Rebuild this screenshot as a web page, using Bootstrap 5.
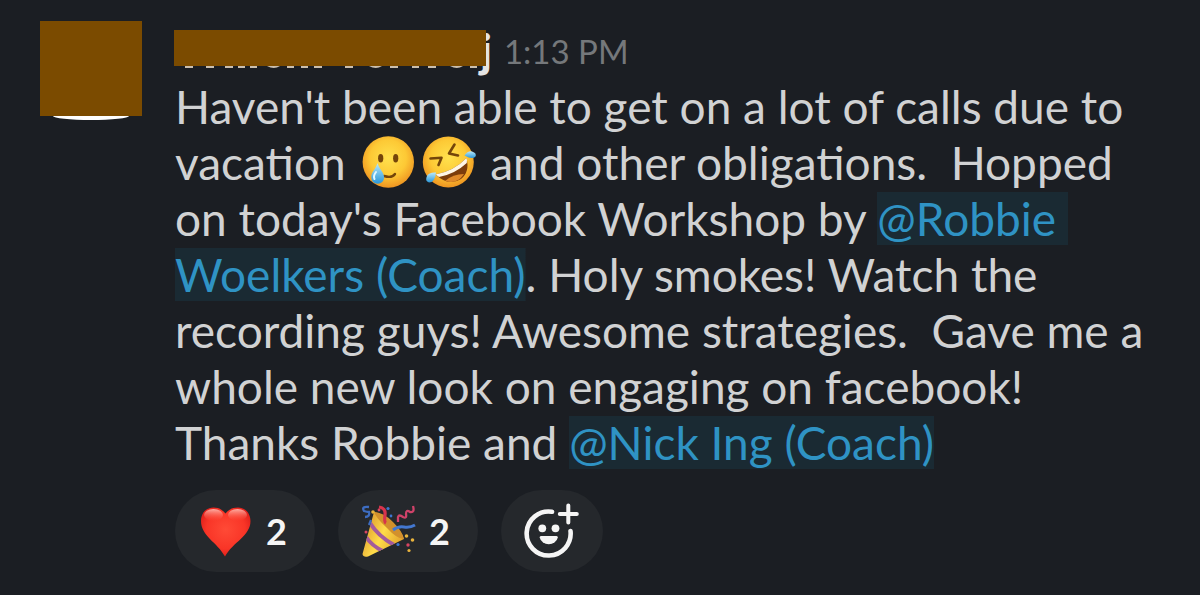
<!DOCTYPE html>
<html lang="en">
<head>
<meta charset="utf-8">
<meta name="viewport" content="width=device-width, initial-scale=1">
<title>Channel message</title>
<link href="https://cdn.jsdelivr.net/npm/bootstrap@5.3.0/dist/css/bootstrap.min.css" rel="stylesheet">
<style>
  body { background: #1b1e23; color: #d1d2d3; font-family: Lato, "Liberation Sans", sans-serif; }
  .message { padding: 21px 40px 24px 40px; gap: 32px; }
  .avatar { width: 102px; }
  .avatar-mask { height: 95px; background: #7b4b00; }
  .avatar-edge { width: 76px; height: 4px; background: #fff; border-radius: 0 0 38px 38px / 0 0 4px 4px; }
  .msg-head { height: 58px; padding-top: 9px; }
  .name-block { width: 312px; }
  .name-mask { height: 36px; background: #7b4b00; }
  .name-rest { width: 312px; height: 3px; }
  .name-tail { font-size: 46px; font-weight: 900; line-height: 40px; color: #e4e4e4; margin-left: -6px; }
  .sent-at { font-size: 33px; line-height: 42px; color: #75787b; margin-left: 12px; }
  .msg-body { padding-left: 1px; }
  .msg-text { font-size: 46px; line-height: 56px; }
  .mention { color: #2f93c4; background: linear-gradient(#1a2a33, #1a2a33) center / 100% 53px no-repeat; text-decoration: none; }
  .emoji-run { margin: 0 4px 0 -3px; }
  .emoji { width: 52px; height: 52px; margin-left: 8px; vertical-align: -8px; overflow: visible; }
  .reactions { gap: 23px; margin-top: 19px; }
  .reaction { height: 82px; border: 0; border-radius: 41px; background: #25282c; color: #f5f5f5; font-size: 36px; line-height: 44px; font-weight: 700; padding: 0 28px 0 25px; gap: 14px; }
  .reaction svg { width: 52px; height: 52px; overflow: visible; }
  .reaction.add-reaction { padding: 0 23px; }
  .add-reaction svg { width: 56px; height: 56px; }
</style>
</head>
<body>
<main class="message d-flex align-items-start">
  <div class="avatar flex-shrink-0" role="img" aria-label="Profile picture">
    <div class="avatar-mask"></div>
    <div class="avatar-edge mx-auto"></div>
  </div>
  <article class="flex-grow-1">
    <header class="msg-head d-flex align-items-start">
      <div class="name-block position-relative flex-shrink-0">
        <div class="name-mask"></div>
        <svg class="name-rest d-block" viewBox="0 0 312 3" aria-hidden="true">
          <path d="M11 1h8M32 1h8M51 1h8M64 1h7M76 1h7M113 1h7M127 1h7M140 1h8M171 1h8M216 1h8M238 1h7M254 1h8M296 1h7" stroke="#cbbfae" stroke-width="2"/>
          <path d="M93 0h13q-6 4-13 0zM195 0h13q-6 4-13 0zM276 0h13q-6 4-13 0z" fill="#cbbfae"/>
        </svg>
      </div>
      <span class="name-tail">j</span>
      <time class="sent-at" datetime="13:13">1:13 PM</time>
    </header>
    <div class="msg-body">
      <p class="msg-text mb-0">Haven't been able to get on a lot of calls due to vacation <span class="emoji-run"><svg class="emoji" viewBox="0 0 52 52" role="img" aria-label="Smiling face with tear">
          <defs>
            <radialGradient id="face" cx=".5" cy=".42" r=".58"><stop offset="0" stop-color="#ffe14e"/><stop offset=".6" stop-color="#fdc935"/><stop offset="1" stop-color="#ee9421"/></radialGradient>
            <linearGradient id="tear" x1="0" y1="0" x2="0" y2="1"><stop offset="0" stop-color="#b9e9fa"/><stop offset="1" stop-color="#2a97d8"/></linearGradient>
          </defs>
          <circle cx="26.3" cy="26" r="25.7" fill="url(#face)"/>
          <ellipse cx="18.7" cy="22.3" rx="2.6" ry="4.2" fill="#74450a"/>
          <ellipse cx="33.7" cy="22.3" rx="2.6" ry="4.2" fill="#74450a"/>
          <path d="M22 40q8 2.500 11-2" fill="none" stroke="#74450a" stroke-width="2.400" stroke-linecap="round"/>
          <path d="M15.500 27C14 33 9 36 9.300 41.500a6.400 6.200 0 0 0 12.800 0C22 36 17 33 15.500 27z" fill="url(#tear)"/>
          <path d="M14 36q-3 4-1.500 7" fill="none" stroke="#e3f8ff" stroke-width="2" stroke-linecap="round"/>
        </svg><svg class="emoji" viewBox="0 0 52 52" role="img" aria-label="Rolling on the floor laughing">
          <circle cx="26.300" cy="26" r="25.500" fill="url(#face)"/>
          <path d="M8.500 22.500L19.500 21.700L16.500 29M32.500 8.500L27 17.500L36 19.500" fill="none" stroke="#74450a" stroke-width="2.600" stroke-linecap="round" stroke-linejoin="round"/>
          <path d="M13.500 38.500Q32 35 44.500 22Q48 36 39 43Q27 51 13.500 38.500z" fill="#7c3d0c"/>
          <path d="M23 45Q31 38 42 38Q35 49 23 45z" fill="#e08a2a"/>
          <path d="M13.500 38.500Q32 35 44.500 22Q45.500 24 44.800 27Q33 38 17 41z" fill="#fff6e6"/>
          <path d="M42.500 19.500Q46 14.500 50 15.500Q55 17 53.500 20.500Q50.500 24 42.500 19.500z" fill="url(#tear)"/>
          <path d="M14 36.500Q7 36 5 40Q2.500 45 7 46.500Q13 46.500 14 36.500z" fill="url(#tear)"/>
        </svg></span> and other obligations.&nbsp; Hopped on today's Facebook Workshop by <a class="mention" href="#">@Robbie&nbsp;<wbr>Woelkers (Coach)</a>. Holy smokes! Watch the recording guys! Awesome strategies.&nbsp; Gave me a whole new look on engaging on facebook! Thanks Robbie and <a class="mention" href="#">@Nick Ing (Coach)</a></p>
      <div class="reactions d-flex flex-wrap">
        <button type="button" class="reaction d-flex align-items-center" aria-label="Heart, 2 reactions">
          <svg viewBox="0 0 52 52" aria-hidden="true">
            <defs>
              <radialGradient id="heart" cx=".5" cy=".45" r=".6"><stop offset="0" stop-color="#ff4a36"/><stop offset=".65" stop-color="#f93527"/><stop offset="1" stop-color="#d91b18"/></radialGradient>
              <linearGradient id="shine" x1="0" y1="0" x2="0" y2="1"><stop offset="0" stop-color="#ffc0b6" stop-opacity=".9"/><stop offset="1" stop-color="#ff5a48" stop-opacity="0"/></linearGradient>
            </defs>
            <path d="M25.500 8.500C22 4 18 2.500 13.500 2.500C6 2.500 1 8 1 16C1 31 17 37 25 51.500C33 37 50.500 31 50.500 16C50.500 8 45 2.500 38 2.500C33 2.500 29 4 25.500 8.500z" fill="url(#heart)"/>
            <ellipse cx="13.500" cy="10" rx="9.500" ry="6" fill="url(#shine)"/>
            <ellipse cx="37.500" cy="10" rx="9.500" ry="6" fill="url(#shine)"/>
          </svg>
          <span>2</span>
        </button>
        <button type="button" class="reaction d-flex align-items-center" aria-label="Party popper, 2 reactions">
          <svg viewBox="0 0 52 52" aria-hidden="true">
            <defs>
              <linearGradient id="cone" x1="0" y1=".3" x2="1" y2=".8"><stop offset="0" stop-color="#d9912a"/><stop offset=".45" stop-color="#ffdc4a"/><stop offset="1" stop-color="#d98f22"/></linearGradient>
              <clipPath id="cone-shape"><path d="M11 7Q19 8 29 18Q39 27 41 34L5 51.500Q0 52.500-.500 49z"/></clipPath>
            </defs>
            <g clip-path="url(#cone-shape)">
              <rect x="-2" y="5" width="46" height="48" fill="url(#cone)"/>
              <path d="M7 18Q15 31 31 40M3 32Q9 41 20 46" fill="none" stroke="#a45b9c" stroke-width="4"/>
            </g>
            <path d="M11 7Q20 7 30 17Q40 27 41 34Q34 34 24 23Q13 13 11 7z" fill="#d2902c"/>
            <path d="M16 2Q23 3 22 10T23 18" fill="none" stroke="#d8344c" stroke-width="3.200"/>
            <path d="M6 2Q-2 1 1 6Q4 7 6 7Q7 12 2 12M8 15L6 20" fill="none" stroke="#3d6cc0" stroke-width="2.300"/>
            <path d="M50 1Q52 8 47 7Q43 4 43 9Q44 14 40 12Q36 9 35 12L35 17" fill="none" stroke="#cf4269" stroke-width="2.300"/>
            <path d="M30 25Q35 21 41 22T52 20" fill="none" stroke="#4377cf" stroke-width="3"/>
            <g fill="#e8b33d"><circle cx="10" cy="7" r="1.800"/><circle cx="43.500" cy="31" r="1.800"/><circle cx="49.500" cy="35" r="1.800"/><circle cx="46" cy="45.500" r="1.600"/></g>
            <g fill="#d84461"><circle cx="3" cy="27" r="1.500"/><circle cx="45" cy="40" r="1.700"/><circle cx="16" cy="5" r="1.400"/></g>
            <g fill="#3d75d0"><circle cx="25" cy="3.500" r="1.600"/><circle cx="28" cy="11" r="1.400"/><circle cx="35" cy="39.500" r="1.600"/></g>
          </svg>
          <span>2</span>
        </button>
        <button type="button" class="reaction add-reaction d-flex align-items-center" aria-label="Add reaction">
          <svg viewBox="0 0 56 56" aria-hidden="true">
            <path d="M46.500 28A22 22 0 1 1 28 8.800" fill="none" stroke="#f5f5f5" stroke-width="4.600" stroke-linecap="round"/>
            <path d="M44.300 2.500v17M35.800 11h17" stroke="#f5f5f5" stroke-width="4" stroke-linecap="round"/>
            <circle cx="18.300" cy="25.300" r="3.900" fill="#f5f5f5"/>
            <circle cx="31.500" cy="25.300" r="3.900" fill="#f5f5f5"/>
            <path d="M17 33H32.500Q34 33 33.800 34.500A9.200 8.200 0 0 1 15.700 34.500Q15.500 33 17 33z" fill="#f5f5f5"/>
          </svg>
        </button>
      </div>
    </div>
  </article>
</main>
<script src="https://cdn.jsdelivr.net/npm/bootstrap@5.3.0/dist/js/bootstrap.bundle.min.js"></script>
</body>
</html>
